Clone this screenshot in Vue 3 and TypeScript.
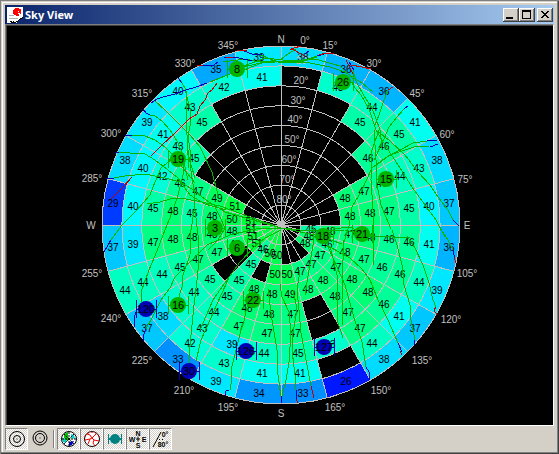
<script setup lang="ts">
import { ref } from 'vue'

interface Label { x: number; y: number; text: string }
interface Satellite { id: number; x: number; y: number; kind: 'gps' | 'sbas' }
interface Track { kind: 'high' | 'low' | 'lost'; points: string }

const CX = 281
const CY = 225
const RADIUS = 179
const RINGS = 9
const STEP = RADIUS / RINGS

/* Signal level per 15 degree sector, from the horizon to the zenith; 0 is no data. */
const levels: number[][] = [
  [38],
  [36, 43],
  [36, 44, 45],
  [41, 45, 46, 46],
  [38, 43, 44, 46, 47, 48],
  [37, 40, 45, 47, 48, 48],
  [36, 41, 46, 46, 48, 47, 48, 45],
  [39, 44, 46, 46, 47, 48, 46, 48],
  [37, 41, 46, 48, 48, 47, 47, 48],
  [38, 44, 47, 47, 48, 48, 47],
  [26, 0, 43, 0, 0, 48, 47],
  [33, 41, 45, 47, 47, 49, 50],
  [34, 41, 44, 47, 48, 48, 50, 50, 51],
  [39, 43, 39, 47, 48, 48, 0, 50, 51],
  [33, 42, 43, 44, 45, 45, 45, 46, 51],
  [37, 38, 43, 44, 45, 0, 0, 51, 51],
  [44, 44, 44, 45, 47, 47, 48, 51, 51],
  [37, 39, 47, 48, 48, 48, 48, 51, 51],
  [29, 40, 45, 48, 45, 48, 50, 51],
  [38, 40, 42, 46, 47, 49, 51],
  [39, 41, 43, 45],
  [40, 43, 45],
  [35, 42],
  [39, 41],
]

const ramp: Record<number, string> = {
  26: '#0018ff', 29: '#003cff', 33: '#0090ff', 34: '#0096ff', 35: '#00a8ff',
  36: '#00b4ff', 37: '#00c8ff', 38: '#00dcff', 39: '#00e8ff', 40: '#00f8ff',
  41: '#00fff0', 42: '#00ffd8', 43: '#00ffcc', 44: '#00ffc0', 45: '#00ffa8',
  46: '#00ff98', 47: '#00ff84', 48: '#00ff74', 49: '#00ff60', 50: '#00ff50', 51: '#00ff40',
}

function polar(r: number, azimuth: number): [number, number] {
  const a = (azimuth * Math.PI) / 180
  return [CX + r * Math.sin(a), CY - r * Math.cos(a)]
}

function cellPath(sector: number, ring: number): string {
  const outer = RADIUS - ring * STEP
  const inner = outer - STEP
  const from = sector * 15
  const to = from + 15
  return `M${polar(outer, from)} A${outer} ${outer} 0 0 1 ${polar(outer, to)} L${polar(inner, to)} A${inner} ${inner} 0 0 0 ${polar(inner, from)}Z`
}

const cells = levels.flatMap((row, sector) =>
  row
    .map((value, ring) => {
      const [x, y] = polar(RADIUS - (ring + 0.5) * STEP, sector * 15 + 7.5)
      return { key: `${sector}-${ring}`, value, ring, x: Math.round(x), y: Math.round(y) + 4, d: cellPath(sector, ring) }
    })
    .filter((cell) => cell.value > 0),
)
const cellLabels = cells.filter((cell) => cell.ring < 8)

const rings = Array.from({ length: RINGS }, (_, i) => RADIUS - i * STEP)
const spokes = Array.from({ length: 24 }, (_, i) => polar(RADIUS, i * 15))

const azimuths: Label[] = [
  { x: 281, y: 39, text: 'N' }, { x: 305, y: 40, text: '0°' }, { x: 330, y: 45, text: '15°' },
  { x: 374, y: 63, text: '30°' }, { x: 417, y: 93, text: '45°' }, { x: 447, y: 134, text: '60°' },
  { x: 465, y: 179, text: '75°' }, { x: 467, y: 225, text: 'E' }, { x: 467, y: 273, text: '105°' },
  { x: 451, y: 319, text: '120°' }, { x: 422, y: 360, text: '135°' }, { x: 381, y: 390, text: '150°' },
  { x: 335, y: 407, text: '165°' }, { x: 281, y: 413, text: 'S' }, { x: 228, y: 407, text: '195°' },
  { x: 184, y: 390, text: '210°' }, { x: 142, y: 360, text: '225°' }, { x: 111, y: 318, text: '240°' },
  { x: 92, y: 273, text: '255°' }, { x: 91, y: 225, text: 'W' }, { x: 92, y: 178, text: '285°' },
  { x: 111, y: 133, text: '300°' }, { x: 142, y: 93, text: '315°' }, { x: 185, y: 63, text: '330°' },
  { x: 228, y: 45, text: '345°' },
]

const elevations: Label[] = [
  { x: 303, y: 60, text: '10°' }, { x: 301, y: 80, text: '20°' }, { x: 298, y: 100, text: '30°' },
  { x: 295, y: 119, text: '40°' }, { x: 292, y: 139, text: '50°' }, { x: 289, y: 159, text: '60°' },
  { x: 287, y: 179, text: '70°' }, { x: 284, y: 199, text: '80°' },
]

const satellites: Satellite[] = [
  { id: 8, x: 237, y: 69, kind: 'gps' }, { id: 26, x: 343, y: 82, kind: 'gps' },
  { id: 19, x: 178, y: 159, kind: 'gps' }, { id: 15, x: 386, y: 179, kind: 'gps' },
  { id: 3, x: 215, y: 228, kind: 'gps' }, { id: 6, x: 237, y: 248, kind: 'gps' },
  { id: 18, x: 323, y: 236, kind: 'gps' }, { id: 21, x: 362, y: 234, kind: 'gps' },
  { id: 22, x: 253, y: 300, kind: 'gps' }, { id: 16, x: 178, y: 305, kind: 'gps' },
  { id: 120, x: 146, y: 309, kind: 'sbas' }, { id: 30, x: 189, y: 371, kind: 'sbas' },
  { id: 126, x: 246, y: 351, kind: 'sbas' }, { id: 127, x: 324, y: 347, kind: 'sbas' },
]

const tracks: Track[] = [
  { kind: 'high', points: '155,101 165,110 175,120 190,135 200,147 212,172 218,195' },
  { kind: 'high', points: '150,115 155,116 162,121 170,130 177,141 181,150 188,180' },
  { kind: 'high', points: '132,135 145,136 155,140 165,147 172,154 183,168 195,183' },
  { kind: 'high', points: '119,152 130,153 145,154 155,160 168,170 178,178 190,195 205,204 226,210' },
  { kind: 'high', points: '114,178 125,176 145,174 165,178 180,182 192,189 206,200 225,212 260,222 281,228 320,236 342,244' },
  { kind: 'high', points: '180,80 185,88 187,97 190,108 191,122 188,135 190,150 190,165 194,190 195,210 198,235 199,260 197,280 194,305 192,325 190,345 189,365' },
  { kind: 'high', points: '186,90 187,135 188,155 195,178' },
  { kind: 'high', points: '147,204 160,202 170,199 180,198 197,201 220,206 250,217 281,228 310,231 345,230 373,237' },
  { kind: 'high', points: '111,240 122,225 137,210 150,195 155,182 161,168 172,159' },
  { kind: 'high', points: '141,302 141,292 149,270 157,251 163,235 167,225 172,213 178,195 183,175 184,160' },
  { kind: 'high', points: '146,329 152,318 161,300 170,288 175,277 190,262 207,245 230,235 260,228 281,228' },
  { kind: 'high', points: '178,300 182,287 183,275 190,255 191,230 195,205' },
  { kind: 'high', points: '200,330 206,316 213,300 222,287 240,262 254,247 265,238 281,230' },
  { kind: 'high', points: '230,390 232,378 231,370 236,350 241,330 244,321 248,302 250,290' },
  { kind: 'high', points: '196,361 201,340 210,320 221,295 229,278' },
  { kind: 'high', points: '214,205 220,217 225,228 218,240 208,250' },
  { kind: 'high', points: '268,289 272,320 277,350 278,375 281,397' },
  { kind: 'high', points: '280,284 282,297 289,312 291,333 289,362 286,380 282,396' },
  { kind: 'high', points: '293,290 297,309 293,333 292,350 295,375 296,390' },
  { kind: 'high', points: '300,270 297,290 299,310 301,333 307,365 311,386' },
  { kind: 'high', points: '313,228 313,245 309,270 305,295' },
  { kind: 'high', points: '323,236 331,250 337,275 338,300 337,320 343,338' },
  { kind: 'high', points: '313,236 326,242 333,258 345,285 354,318 362,342 366,367' },
  { kind: 'high', points: '330,247 350,258 362,269 370,280 378,300 388,320 398,343' },
  { kind: 'high', points: '343,240 343,260 342,300 343,325' },
  { kind: 'high', points: '392,230 397,245 402,265 404,285 410,305 411,320 415,340' },
  { kind: 'high', points: '407,236 415,248 423,265 429,283 433,300 436,307' },
  { kind: 'high', points: '442,231 448,240 453,250' },
  { kind: 'high', points: '376,130 385,145 400,168 412,187 425,205 436,220 445,237' },
  { kind: 'high', points: '376,130 390,141 405,155 418,172 430,185 438,197 448,210 453,220' },
  { kind: 'high', points: '379,130 372,150 371,180 373,210 373,265' },
  { kind: 'high', points: '374,130 376,160 376,180 381,205 391,229' },
  { kind: 'high', points: '427,141 413,143 400,150 385,158 372,168 362,190 352,207 349,226 344,242' },
  { kind: 'high', points: '429,146 417,146 405,150 390,155 374,167' },
  { kind: 'high', points: '333,229 349,227 373,236 410,238' },
  { kind: 'high', points: '223,62 245,59 255,61 281,62 305,60 317,56' },
  { kind: 'high', points: '239,68 260,63 290,61 310,63 330,67 345,72 362,83 373,92' },
  { kind: 'high', points: '246,69 262,63 281,59 288,54 296,49' },
  { kind: 'high', points: '210,82 230,74 244,66 265,58 292,61 315,59 340,66 353,79' },
  { kind: 'high', points: '258,54 268,58 278,62 297,63 317,57' },
  { kind: 'high', points: '348,77 355,88 361,95 369,109 376,130 388,150' },
  { kind: 'high', points: '353,70 356,81 364,96 372,108 380,130 382,148' },
  { kind: 'high', points: '388,90 383,103 379,115 375,125' },
  { kind: 'high', points: '404,109 397,117 389,127 384,139 374,160' },
  { kind: 'low', points: '151,103 157,99 163,97 175,94 186,90 196,87 207,83' },
  { kind: 'low', points: '178,78 182,83' },
  { kind: 'low', points: '143,109 146,113 150,115' },
  { kind: 'low', points: '125,136 132,135' },
  { kind: 'low', points: '115,152 119,152' },
  { kind: 'low', points: '106,178 114,178' },
  { kind: 'low', points: '104,252 108,245 111,240' },
  { kind: 'low', points: '143,341 143,336 146,329' },
  { kind: 'low', points: '134,327 134,317 137,310' },
  { kind: 'low', points: '225,396 226,391 229,390' },
  { kind: 'low', points: '281,396 282,403' },
  { kind: 'low', points: '296,390 296,399' },
  { kind: 'low', points: '366,367 369,372 369,380' },
  { kind: 'low', points: '398,343 402,352' },
  { kind: 'low', points: '415,340 414,345' },
  { kind: 'low', points: '453,250 455,260' },
  { kind: 'low', points: '453,220 459,226' },
  { kind: 'low', points: '427,141 437,140' },
  { kind: 'low', points: '430,147 438,144' },
  { kind: 'low', points: '404,109 408,106' },
  { kind: 'low', points: '197,66 214,65 218,62' },
  { kind: 'low', points: '224,57 239,58 252,61' },
  { kind: 'low', points: '244,51 252,54 262,55' },
  { kind: 'low', points: '317,56 328,53' },
  { kind: 'low', points: '305,54 309,51' },
  { kind: 'low', points: '354,70 349,62' },
  { kind: 'lost', points: '217,83 212,90 208,93 205,100 200,106 197,114 189,119 185,123 175,133 162,145 151,156' },
  { kind: 'lost', points: '132,177 123,187 111,199' },
  { kind: 'lost', points: '197,65 203,65' },
  { kind: 'lost', points: '226,57 233,57' },
  { kind: 'lost', points: '237,50 247,50' },
  { kind: 'lost', points: '290,50 294,48 301,46' },
  { kind: 'lost', points: '291,48 299,53 305,56' },
  { kind: 'lost', points: '319,55 326,53 334,53' },
  { kind: 'lost', points: '346,60 350,68 353,74' },
  { kind: 'lost', points: '351,65 362,67 371,69' },
  { kind: 'lost', points: '388,90 393,87' },
  { kind: 'lost', points: '454,257 456,263' },
  { kind: 'lost', points: '436,307 434,310 437,315' },
  { kind: 'lost', points: '311,386 314,398' },
  { kind: 'lost', points: '296,399 298,403' },
  { kind: 'lost', points: '400,351 402,355' },
]

const tools = ref([
  { id: 'rings', label: 'Large rings', on: true },
  { id: 'target', label: 'Small rings', on: false },
  { id: 'levels', label: 'Signal levels', on: true },
  { id: 'tracks', label: 'Tracks', on: true },
  { id: 'sats', label: 'Satellites', on: true },
  { id: 'compass', label: 'Compass', on: true },
  { id: 'degrees', label: 'Degrees', on: true },
])
</script>

<template>
  <main class="window">
    <header class="title-bar">
      <svg class="app-icon" viewBox="0 0 16 16" aria-hidden="true" shape-rendering="crispEdges">
        <path fill="#fff" d="M0 0h16v11h-2v1h-2v2h-2v2H0z" />
        <path fill="#b0b0b0" d="M2 8h5v1H2zM2 11h9v1H2z" />
        <path fill="#f00" d="M8 1h4v1h2v5h-2v2H9V8H7V7H6V3h1V2h1z" />
        <path fill="#fff" d="M11 4h1v1h-1zM11 6h2v1h-2z" />
        <path fill="#000" d="M15 10h1v1h-1zM13 11h2v1h-2zM12 12h1v1h-1zM11 13h1v1h-1zM9 14h2v1H9zM3 14h2v1H3zM6 14h1v1H6zM4 15h5v1H4z" />
      </svg>
      <h1>Sky View</h1>
      <button type="button" class="caption" aria-label="Minimize">
        <svg viewBox="0 0 16 14"><path fill="#000" d="M3 9h7v2H3z" /></svg>
      </button>
      <button type="button" class="caption" aria-label="Maximize">
        <svg viewBox="0 0 16 14" shape-rendering="crispEdges"><path fill="#000" fill-rule="evenodd" d="M3 2h9v9H3zM4 4v6h7V4z" /></svg>
      </button>
      <button type="button" class="caption close" aria-label="Close">
        <svg viewBox="0 0 16 14" shape-rendering="crispEdges">
          <path fill="#000" d="M4 3h2v1h1v1h2V4h1V3h2v1h-1v1h-1v1H9v1h1v1h1v1h1v1h-2V9H9V8H7v1H6v1H4V9h1V8h1V7h1V6H6V5H5V4H4z" />
        </svg>
      </button>
    </header>

    <section class="sky">
      <svg class="plot" viewBox="6 25 547 400" role="img" aria-label="Sky view">
        <g class="cells">
          <path v-for="cell in cells" :key="cell.key" :d="cell.d" :fill="ramp[cell.value]" />
        </g>
        <g class="grid">
          <circle v-for="r in rings" :key="r" :cx="CX" :cy="CY" :r="r" />
          <line v-for="(end, i) in spokes" :key="i" :x1="CX" :y1="CY" :x2="end[0]" :y2="end[1]" />
          <circle class="zenith" :cx="CX" :cy="CY" r="4" />
        </g>
        <g class="text scale">
          <text v-for="label in azimuths" :key="label.text" :x="label.x" :y="label.y + 4">{{ label.text }}</text>
          <text v-for="label in elevations" :key="label.text" :x="label.x" :y="label.y + 4">{{ label.text }}</text>
        </g>
        <g class="text level">
          <text v-for="cell in cellLabels" :key="cell.key" :x="cell.x" :y="cell.y">{{ cell.value }}</text>
        </g>
        <g class="tracks">
          <polyline v-for="(track, i) in tracks" :key="i" :class="track.kind" :points="track.points" />
        </g>
        <g v-for="sat in satellites" :key="sat.id" :class="['satellite', sat.kind]" :transform="`translate(${sat.x} ${sat.y})`">
          <path d="M-10 -9V9M10 -9V9M-10 0H10" />
          <circle r="8" />
          <text y="4">{{ sat.id }}</text>
        </g>
      </svg>
    </section>

    <footer class="toolbar">
      <template v-for="tool in tools" :key="tool.id">
        <button type="button" :class="['tool', { pressed: tool.on }]" :aria-label="tool.label" :aria-pressed="tool.on" @click="tool.on = !tool.on">
          <svg viewBox="0 0 18 18" aria-hidden="true">
            <g v-if="tool.id === 'rings'" fill="none" stroke="#000">
              <circle cx="9" cy="9" r="7.500" /><circle cx="9" cy="9" r="3.500" /><path d="M8.500 9h1" />
            </g>
            <g v-else-if="tool.id === 'target'" fill="none" stroke="#000">
              <circle cx="9" cy="8" r="7" /><circle cx="9" cy="8" r="4.500" /><path d="M8.500 8h1" />
            </g>
            <g v-else-if="tool.id === 'levels'">
              <circle cx="9" cy="9" r="7.500" fill="#fff" />
              <path fill="#00c000" d="M4 4l4-2v5l3 2-4 2-3-3z" />
              <path fill="#00d0d0" d="M2 8l4 1v4l-3-1zM11 4l3 1 1 4-4-1z" />
              <path fill="#0000d0" d="M9 12l5-1-2 4-3 1z" />
              <g fill="none" stroke="#000">
                <circle cx="9" cy="9" r="7.500" /><path d="M9 2v14M2 9h14M4 4l10 10M14 4L4 14" stroke-dasharray="2 1" />
              </g>
            </g>
            <g v-else-if="tool.id === 'tracks'" fill="none">
              <circle cx="9" cy="9" r="7.500" fill="#fff" stroke="#000" />
              <path stroke="#f00" d="M4 4l3 1 2 3 4-4M2 10l5-1 2-1 2 2 5 1M11 10l-1 3 2 3M7 9l-2 5" />
              <path stroke="#f00" stroke-dasharray="2 2" d="M2 7a7.500 7.500 0 0 1 14 0" />
            </g>
            <g v-else-if="tool.id === 'sats'" fill="#008080">
              <circle cx="9" cy="9" r="5" /><path d="M2 4h1v10H2zM15 4h1v10h-1zM3 8h12v2H3z" />
            </g>
            <g v-else-if="tool.id === 'compass'" class="mini">
              <text x="9" y="6">N</text><text x="3" y="12">W</text><text x="15" y="12">E</text><text x="9" y="18">S</text>
              <path d="M9 6.500v5M7 9h4" stroke="#000" />
            </g>
            <g v-else class="mini">
              <path d="M9 2L1 17" fill="none" stroke="#000" />
              <text x="13" y="7">0°</text><text x="11" y="17">80°</text><path d="M7 9.500h1M10 9.500h1" stroke="#000" />
            </g>
          </svg>
        </button>
        <span v-if="tool.id === 'target'" class="separator" />
      </template>
    </footer>
  </main>
</template>

<style>
body {
  margin: 0;
}
</style>

<style scoped>
.window {
  box-sizing: border-box;
  display: flex;
  flex-direction: column;
  height: 100vh;
  padding: 5px 5px 2px;
  background: #d4d0c8;
  box-shadow: inset 1px 1px #808080, inset -1px -1px #404040, inset -2px -2px #808080, inset 2px 2px #d4d0c8, inset 3px 3px #fff;
}

.title-bar {
  display: flex;
  align-items: center;
  box-sizing: border-box;
  height: 19px;
  padding: 0 1px 0 2px;
  background: linear-gradient(to right, #0a246a, #a6caf0);
}

.app-icon {
  width: 16px;
  height: 16px;
}

h1 {
  flex: 1;
  margin: 0 0 0 2px;
  color: #fff;
  font: bold 11px/18px "Noto Sans", "Open Sans", sans-serif;
}

.caption {
  width: 16px;
  height: 14px;
  padding: 0;
  border: 0;
  background: #d4d0c8;
  box-shadow: inset -1px -1px #404040, inset 1px 1px #fff, inset -2px -2px #808080;
}

.caption svg {
  display: block;
  width: 16px;
  height: 14px;
}

.close {
  margin-left: 2px;
}

.sky {
  display: flex;
  flex: 1;
  min-height: 0;
  border: 1px solid;
  border-color: #808080 #fff #fff #808080;
  background: #000;
  box-shadow: inset 1px 1px #404040;
}

.plot {
  width: 100%;
  height: 100%;
}

.cells,
.grid,
.tracks {
  shape-rendering: crispEdges;
}

.grid {
  fill: none;
  stroke: #c0c0c0;
}

.zenith {
  fill: #c0c0c0;
}

.text text,
.satellite text {
  text-anchor: middle;
}

.text {
  font: 10px "Liberation Sans", sans-serif;
}

.scale {
  fill: #c0c0c0;
}

.level {
  fill: #000;
}

.tracks {
  fill: none;
}

.high {
  stroke: #00b400;
}

.low {
  stroke: #0000b4;
}

.lost {
  stroke: #c00000;
}

.satellite path {
  fill: none;
  shape-rendering: crispEdges;
}

.satellite text {
  fill: #000;
  font: 11px "Liberation Sans", sans-serif;
}

.gps circle {
  fill: #00b400;
}

.gps path {
  stroke: #00b400;
}

.sbas circle {
  fill: #0000b4;
}

.sbas path {
  stroke: #0000b4;
}

.toolbar {
  display: flex;
  align-items: center;
  height: 26px;
}

.tool {
  display: grid;
  place-items: center;
  box-sizing: border-box;
  width: 23px;
  height: 22px;
  padding: 0;
  border: 1px solid transparent;
  background: none;
}

.pressed {
  border-color: #808080 #fff #fff #808080;
  background: conic-gradient(#d4d0c8 25%, #fff 0 50%, #d4d0c8 0 75%, #fff 0) 0 0 / 2px 2px;
}

.tool svg {
  width: 18px;
  height: 18px;
}

.mini text {
  fill: #000;
  font: bold 7px "Liberation Sans", sans-serif;
  text-anchor: middle;
}

.separator {
  width: 1px;
  height: 18px;
  margin: 0 2px;
  border-right: 1px solid #fff;
  background: #808080;
}
</style>
